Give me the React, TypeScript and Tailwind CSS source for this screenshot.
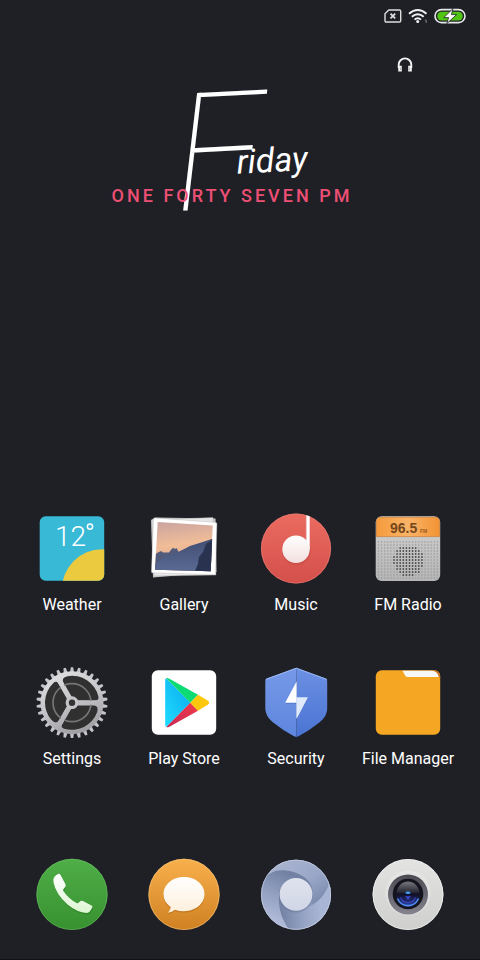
import React from "react";

const TEETH = Array.from({ length: 30 }, (_, i) => i * 12);

const HOLES = Array.from({ length: 13 }, (_, row) =>
    Array.from({ length: 20 }, (_, col) => {
        const x = 6.5 + col * 3.1;
        const y = 30 + row * 3;
        return { x, y, dark: Math.hypot(x - 36.5, y - 48.5) < 15.5 };
    })
).flat();

function IconFrame({ children }: { children: React.ReactNode }) {
    return (
        <svg viewBox="0 0 72 72" className="size-[72px] shrink-0" aria-hidden="true">
            {children}
        </svg>
    );
}

function WeatherIcon() {
    return (
        <IconFrame>
            <defs>
                <clipPath id="weather-tile">
                    <rect x="3.7" y="4.3" width="64.5" height="64.5" rx="6" />
                </clipPath>
            </defs>
            <g clipPath="url(#weather-tile)">
                <rect width="72" height="72" fill="#38b9d6" />
                <circle cx="66" cy="77.3" r="40" fill="#ebca40" />
            </g>
            <text x="19" y="34" fontSize="28" fill="#fff" className="font-['Roboto',sans-serif] font-light">12</text>
            <circle cx="54" cy="14.6" r="2.6" fill="none" stroke="#fff" strokeWidth="1.5" />
        </IconFrame>
    );
}

function GalleryIcon() {
    return (
        <IconFrame>
            <defs>
                <linearGradient id="gallery-sky" x1="0" y1="0" x2="0.15" y2="1">
                    <stop offset="0" stopColor="#c9a3a0" />
                    <stop offset="0.5" stopColor="#f0bd98" />
                    <stop offset="1" stopColor="#e3a58d" />
                </linearGradient>
                <linearGradient id="gallery-hill" x1="0" y1="0" x2="0" y2="1">
                    <stop offset="0" stopColor="#414e73" />
                    <stop offset="1" stopColor="#5a6a93" />
                </linearGradient>
            </defs>
            <path d="M7 5.5 67.5 6.5 68.5 60 5 65.5 3 8Z" fill="#c9c9c9" />
            <path d="M4 8 65 5.5 68 63 6 64Z" fill="#e6e6e6" stroke="#aaa" strokeWidth="0.4" />
            <path d="M7 6 67.8 10.4Q69 10.5 68.9 12L67.5 61.3Q67.4 62.5 66 62.5L4.5 60.8Q3.3 60.7 3.4 59.5L5.6 7.2Q5.7 6 7 6Z" fill="#fff" stroke="#bbb" strokeWidth="0.4" />
            <path d="M9.7 10 64.7 13.5 62.7 59.3 7 57.7Z" fill="url(#gallery-sky)" />
            <path d="M7.9 42 9 41 13 39 15 40.6 21 40.4 22.5 38.5 25 35.8 27 37 28.5 36 31 40.5 42 34 64.1 27 62.7 59.3 7 57.7Z" fill="#515b7c" />
            <path d="M7.2 52 17 45 29 40.5 42 34.3 51 31.7 64.1 27 62.7 59.3 7 57.7Z" fill="url(#gallery-hill)" />
            <path d="M64.1 28 58 32 55 40 51 45 50 52 47 58.8 62.7 59.3Z" fill="#293350" />
        </IconFrame>
    );
}

function MusicIcon() {
    return (
        <IconFrame>
            <defs>
                <linearGradient id="music-disc" x1="0" y1="0" x2="0" y2="1">
                    <stop offset="0" stopColor="#ea6b60" />
                    <stop offset="1" stopColor="#d4504b" />
                </linearGradient>
                <linearGradient id="music-note" x1="0" y1="0" x2="0" y2="1">
                    <stop offset="0" stopColor="#fff" />
                    <stop offset="1" stopColor="#f3dfdf" />
                </linearGradient>
            </defs>
            <circle cx="36" cy="36.5" r="35" fill="url(#music-disc)" />
            <circle cx="36" cy="36.5" r="34.6" fill="none" stroke="#f0877d" strokeWidth="0.7" opacity="0.7" />
            <circle cx="36.3" cy="39" r="14.3" fill="#b94540" opacity="0.4" />
            <path d="M46 3.2 49.7 4.2V37.3H46Z" fill="#fff" />
            <path d="M46.3 3.4V32" stroke="#e9a8a4" strokeWidth="0.8" />
            <circle cx="36" cy="37.3" r="13.7" fill="url(#music-note)" />
        </IconFrame>
    );
}

function RadioIcon() {
    return (
        <IconFrame>
            <defs>
                <linearGradient id="radio-body" x1="0" y1="0" x2="0" y2="1">
                    <stop offset="0" stopColor="#d2d2d2" />
                    <stop offset="1" stopColor="#b5b5b5" />
                </linearGradient>
                <linearGradient id="radio-screen">
                    <stop offset="0" stopColor="#f59a3c" />
                    <stop offset="0.5" stopColor="#fbb468" />
                    <stop offset="1" stopColor="#f29334" />
                </linearGradient>
            </defs>
            <rect x="3.7" y="4.3" width="64.5" height="64.7" rx="6" fill="url(#radio-body)" />
            <path d="M4.5 24.6V10Q4.5 5.3 9.5 5.3H62.5Q67.5 5.3 67.5 10V24.6Z" fill="url(#radio-screen)" stroke="#ce7e2d" strokeWidth="0.7" />
            {HOLES.map((h) => (
                <circle key={`${h.x}-${h.y}`} cx={h.x} cy={h.y} r={h.dark ? 0.9 : 0.75} fill={h.dark ? "#4c4c4c" : "#999"} />
            ))}
            <text x="18" y="21.3" fontSize="14" fill="#74471d" className="font-['Liberation_Sans',sans-serif] font-bold">96.5</text>
            <text x="48" y="21" fontSize="5" fill="#9a5c22" className="font-['Liberation_Sans',sans-serif] font-bold">FM</text>
        </IconFrame>
    );
}

function SettingsIcon() {
    return (
        <IconFrame>
            <defs>
                <linearGradient id="gear-metal" gradientUnits="userSpaceOnUse" x1="20" y1="1" x2="48" y2="72">
                    <stop offset="0" stopColor="#e2e2e4" />
                    <stop offset="0.5" stopColor="#c4c4c8" />
                    <stop offset="1" stopColor="#97979c" />
                </linearGradient>
            </defs>
            {TEETH.map((angle) => (
                <path key={angle} d="M33.9 7 34.8 1.2H37.2L38.1 7Z" fill="#c5c5c9" transform={`rotate(${angle} 36 36.7)`} />
            ))}
            <circle cx="36" cy="36.7" r="31.5" fill="url(#gear-metal)" />
            {[0, 120, 240].map((angle) => (
                <path
                    key={angle}
                    d="M42 34.3H60Q63 34.3 62.4 30.5A27 27 0 0 0 31.5 10.2Q24.8 12 27.5 16.5L36 31.2Q40.2 31.8 42 34.3Z"
                    fill="#303030"
                    transform={`rotate(${angle} 36 36.7)`}
                />
            ))}
            <circle cx="36" cy="36.7" r="19" fill="none" stroke="#757577" strokeWidth="1.7" />
            <path d="M36 36.7H64M36 36.7 22 12.4M36 36.7 22 61" stroke="url(#gear-metal)" strokeWidth="4" />
            <circle cx="36" cy="36.7" r="4.8" fill="#333" stroke="#c5c5c9" strokeWidth="3.2" />
        </IconFrame>
    );
}

function PlayStoreIcon() {
    return (
        <IconFrame>
            <defs>
                <linearGradient id="play-blue" x1="1" y1="0" x2="0" y2="1">
                    <stop offset="0" stopColor="#0aa9ee" />
                    <stop offset="1" stopColor="#1fdcff" />
                </linearGradient>
                <linearGradient id="play-red" x1="1" y1="0" x2="0" y2="1">
                    <stop offset="0" stopColor="#f2394a" />
                    <stop offset="1" stopColor="#c52a55" />
                </linearGradient>
            </defs>
            <rect x="3.8" y="4.3" width="64.4" height="64.5" rx="6" fill="#fff" />
            <path d="M18.3 12.3 42.5 36.7 18.3 61Q17.2 60.6 17.2 59V14Q17.2 12.6 18.3 12.3Z" fill="url(#play-blue)" />
            <path d="M18.3 12.3Q19.4 11.7 21 12.4L50 28.7 42.3 36.7Z" fill="#0cdb73" />
            <path d="M18.3 61Q19.4 61.7 21 60.9L50 44.8 42.3 36.7Z" fill="url(#play-red)" />
            <path d="M50 28.7 60 34.8Q62.4 36.7 60 38.6L50 44.8 42.3 36.7Z" fill="#fdc70b" />
        </IconFrame>
    );
}

function SecurityIcon() {
    return (
        <IconFrame>
            <defs>
                <linearGradient id="shield-left" x1="0" y1="0" x2="0" y2="1">
                    <stop offset="0" stopColor="#7699e8" />
                    <stop offset="1" stopColor="#5e86de" />
                </linearGradient>
                <linearGradient id="shield-right" x1="0" y1="0" x2="0" y2="1">
                    <stop offset="0" stopColor="#6b90e3" />
                    <stop offset="1" stopColor="#4b74d3" />
                </linearGradient>
            </defs>
            <path d="M36.3 1.8Q21 7.5 7 12.3Q5.3 13 5.3 15V43Q5.6 50 12.5 56Q23 64.5 34 70.2L36.3 71Z" fill="url(#shield-left)" />
            <path d="M36.3 1.8Q51.5 7.5 65.5 12.3Q67.2 13 67.2 15V43Q67 50 60 56Q49.5 64.5 38.5 70.2L36.3 71Z" fill="url(#shield-right)" />
            <path d="M5.8 13.5Q21 7.8 36.3 2.2Q51.5 7.8 66.8 13.5" fill="none" stroke="#a1bdf3" strokeWidth="0.9" />
            <path d="M36.3 16.5V31.5H48.5L37 53V38H25.5Z" fill="#4467b8" opacity="0.4" />
            <path d="M36.6 15.5V36.7H25.2Z" fill="#fff" />
            <path d="M36.3 31.2H48L37 52.3H36.3Z" fill="#dfeafc" />
        </IconFrame>
    );
}

function FilesIcon() {
    return (
        <IconFrame>
            <rect x="3.8" y="4.3" width="64.4" height="64.5" rx="6" fill="#f5a623" />
            <path d="M61 4.3H62.5Q68.2 4.5 68.2 10.5V12L64 9Z" fill="#c87428" />
            <path d="M30.5 4.8H60Q65.5 5.2 66.7 10.9H35.3Q33.8 10.9 33 9.3Z" fill="#f7f7f7" />
        </IconFrame>
    );
}

function PhoneIcon() {
    const handset =
        "M22.8 15.8Q23.8 15.5 24.4 16.7L29.6 26.6Q30.2 28.2 29 29.3L27.5 31Q26.8 32 27.3 33Q32.5 40.6 40.5 45Q41.6 45.6 42.5 44.7L44.3 43.2Q45.5 42.3 46.9 43L55.5 47.4Q57 48.4 56.2 49.8L53.8 53.5Q52.8 54.9 50.5 54.9Q41.5 54.7 31.5 46.5Q20 36.5 17.5 24.5Q16.8 20.5 18.5 18.8Q20 16.7 22.8 15.8Z";
    return (
        <IconFrame>
            <defs>
                <linearGradient id="phone-disc" x1="0" y1="0" x2="0" y2="1">
                    <stop offset="0" stopColor="#4fae48" />
                    <stop offset="1" stopColor="#37912f" />
                </linearGradient>
                <linearGradient id="phone-set" x1="0" y1="0" x2="0" y2="1">
                    <stop offset="0" stopColor="#fff" />
                    <stop offset="1" stopColor="#ddf6d2" />
                </linearGradient>
            </defs>
            <circle cx="36" cy="36.4" r="35.6" fill="url(#phone-disc)" />
            <circle cx="36" cy="36.4" r="35.2" fill="none" stroke="#7cc876" strokeWidth="0.7" opacity="0.6" />
            <path d={handset} fill="#1d6b1a" opacity="0.35" transform="translate(0.5 1.5)" />
            <path d={handset} fill="url(#phone-set)" />
        </IconFrame>
    );
}

function MessagesIcon() {
    const bubble =
        "M36 19C47.5 19 56.5 26.5 56.5 36S47.5 53.2 36 53.2Q31 53.2 27 51.7Q24 54 20 54.8Q22.3 52.2 22.8 49.2Q15.5 44.2 15.5 36C15.5 26.5 24.5 19 36 19Z";
    return (
        <IconFrame>
            <defs>
                <linearGradient id="msg-disc" x1="0" y1="0" x2="0" y2="1">
                    <stop offset="0" stopColor="#f8b04c" />
                    <stop offset="1" stopColor="#d08122" />
                </linearGradient>
                <linearGradient id="msg-bubble" x1="0" y1="0" x2="0" y2="1">
                    <stop offset="0" stopColor="#fff" />
                    <stop offset="1" stopColor="#fcefdc" />
                </linearGradient>
            </defs>
            <circle cx="36" cy="36.4" r="35.6" fill="url(#msg-disc)" />
            <circle cx="36" cy="36.4" r="35.2" fill="none" stroke="#fbd08e" strokeWidth="0.7" opacity="0.7" />
            <path d={bubble} fill="#96560c" opacity="0.35" transform="translate(0 1.4)" />
            <path d={bubble} fill="url(#msg-bubble)" />
        </IconFrame>
    );
}

function BrowserIcon() {
    return (
        <IconFrame>
            <defs>
                <clipPath id="browser-clip">
                    <circle cx="36" cy="36.7" r="35" />
                </clipPath>
                <linearGradient id="blade-top" gradientUnits="userSpaceOnUse" x1="24" y1="5" x2="56" y2="50">
                    <stop offset="0" stopColor="#a7b2ce" />
                    <stop offset="0.5" stopColor="#9aa7c8" />
                    <stop offset="1" stopColor="#7887ab" />
                </linearGradient>
                <linearGradient id="blade-left" gradientUnits="userSpaceOnUse" x1="30" y1="16" x2="12" y2="60">
                    <stop offset="0" stopColor="#7281a3" />
                    <stop offset="0.5" stopColor="#929fc0" />
                    <stop offset="1" stopColor="#aeb9d7" />
                </linearGradient>
                <linearGradient id="blade-bottom" gradientUnits="userSpaceOnUse" x1="20" y1="52" x2="60" y2="50">
                    <stop offset="0" stopColor="#7281a3" />
                    <stop offset="0.6" stopColor="#97a4c5" />
                    <stop offset="1" stopColor="#a9b5d4" />
                </linearGradient>
                <linearGradient id="browser-core" x1="0" y1="0" x2="0" y2="1">
                    <stop offset="0" stopColor="#dfe3ee" />
                    <stop offset="1" stopColor="#d0d6e6" />
                </linearGradient>
            </defs>
            <g clipPath="url(#browser-clip)">
                <rect width="72" height="72" fill="url(#blade-left)" />
                <path d="M0 20 12 14.5C25 8 52 17 52.5 33L52 46 72 40V0H0Z" fill="url(#blade-top)" />
                <path d="M71 18C68 36 56 50 36 52.5L20 30C17 46 20 60 31 74H72Z" fill="url(#blade-bottom)" />
            </g>
            <circle cx="36" cy="36.7" r="34.6" fill="none" stroke="#c6cee2" strokeWidth="0.7" />
            <circle cx="36" cy="37.6" r="17" fill="#5c6a8e" opacity="0.35" />
            <circle cx="36" cy="36.3" r="16.4" fill="url(#browser-core)" />
        </IconFrame>
    );
}

function CameraIcon() {
    return (
        <IconFrame>
            <defs>
                <linearGradient id="cam-body" x1="0" y1="0" x2="0" y2="1">
                    <stop offset="0" stopColor="#e3e3e2" />
                    <stop offset="1" stopColor="#cfcfce" />
                </linearGradient>
                <linearGradient id="cam-ring" x1="0" y1="0" x2="0" y2="1">
                    <stop offset="0" stopColor="#4b4a52" />
                    <stop offset="1" stopColor="#85838f" />
                </linearGradient>
                <linearGradient id="cam-glass" x1="0" y1="0" x2="0" y2="1">
                    <stop offset="0" stopColor="#77777f" />
                    <stop offset="0.42" stopColor="#2a2a36" />
                    <stop offset="0.5" stopColor="#101025" />
                    <stop offset="1" stopColor="#2e3c9c" />
                </linearGradient>
            </defs>
            <circle cx="36" cy="36.5" r="35.4" fill="url(#cam-body)" />
            <circle cx="36" cy="36.5" r="35" fill="none" stroke="#f3f3f3" strokeWidth="0.7" />
            <circle cx="36" cy="35" r="22.5" fill="#f1f1f0" opacity="0.35" />
            <circle cx="36" cy="36.5" r="20" fill="url(#cam-ring)" />
            <circle cx="36" cy="36" r="15.3" fill="#14141f" />
            <ellipse cx="36" cy="36" rx="11.5" ry="12.5" fill="url(#cam-glass)" />
            <path d="M25.5 40.5A11.3 11.3 0 0 0 46.5 40.5" fill="none" stroke="#4b8bf0" strokeWidth="1.6" />
            <path d="M28.5 39.5A8 8 0 0 0 43.5 39.5" fill="none" stroke="#3346c2" strokeWidth="1.2" />
            <ellipse cx="36" cy="34.7" rx="2.6" ry="1.3" fill="#3c9bf5" />
            <path d="M33 38.3H39L36 42Z" fill="#3349ca" />
        </IconFrame>
    );
}

const APPS = [
    { name: "Weather", Icon: WeatherIcon },
    { name: "Gallery", Icon: GalleryIcon },
    { name: "Music", Icon: MusicIcon },
    { name: "FM Radio", Icon: RadioIcon },
    { name: "Settings", Icon: SettingsIcon },
    { name: "Play Store", Icon: PlayStoreIcon },
    { name: "Security", Icon: SecurityIcon },
    { name: "File Manager", Icon: FilesIcon }
];

const DOCK = [
    { name: "Phone", Icon: PhoneIcon },
    { name: "Messages", Icon: MessagesIcon },
    { name: "Browser", Icon: BrowserIcon },
    { name: "Camera", Icon: CameraIcon }
];

function StatusBar() {
    return (
        <header className="flex h-8 items-center justify-end gap-1.5 px-3.5">
            {/* No SIM */}
            <svg viewBox="0 0 18 14" className="h-3.5 w-[18px]" fill="none" stroke="#dededf" aria-label="No SIM">
                <path d="M4.8 1H15.5Q16.7 1 16.7 2.2V11.8Q16.7 13 15.5 13H2.2Q1 13 1 11.8V4.8Z" strokeWidth="1.4" />
                <path d="M6.5 4.6 11.2 9.4M11.2 4.6 6.5 9.4" strokeWidth="1.8" />
            </svg>
            {/* Wi-Fi */}
            <svg viewBox="0 0 20 16" className="h-4 w-5" fill="none" stroke="#f2f2f3" aria-label="Wi-Fi">
                <path d="M1 5.7Q9.7-1.8 18.5 5.7M3.8 8.8Q9.7 3.6 15.7 8.8M6.5 11.6Q9.7 8.8 13 11.6" strokeWidth="1.9" />
                <circle cx="9.7" cy="13.6" r="1.5" fill="#f2f2f3" stroke="none" />
                <path d="M16.9 12.2H18.2V15" stroke="#8d8d91" strokeWidth="0.9" />
            </svg>
            {/* Battery, charging */}
            <svg viewBox="0 0 32 16" className="h-4 w-8" aria-label="Charging">
                <rect x="1" y="1.6" width="30" height="13" rx="6.5" fill="#1f2026" stroke="#e9e9ea" strokeWidth="1.6" />
                <rect x="3.2" y="3.8" width="25.6" height="8.6" rx="4.3" fill="#4fc414" />
                <path d="M19 0.6 9.8 9.6H14.6L12.8 15.6 22.6 6.6H17.4Z" fill="#fff" stroke="#1f2026" strokeWidth="0.8" />
            </svg>
        </header>
    );
}

export default function App() {
    return (
        <div className="flex min-h-screen flex-col border-b border-[#121317] bg-[#1f2026] font-['Roboto',sans-serif] text-white">
            <StatusBar />

            <div className="flex justify-end pt-6 pr-[66px]">
                <svg viewBox="0 0 18 18" className="size-[18px]" fill="none" stroke="#f2f2f2" aria-label="Headphones">
                    <path d="M2.7 12V8.7A6.3 6.3 0 0 1 15.3 8.7V12" strokeWidth="1.9" />
                    <path d="M4 9.8V15.5M14 9.8V15.5" strokeWidth="3.6" />
                    <path d="M4.6 11.5V14M13.4 11.5V14" stroke="#8b8b90" strokeWidth="0.6" />
                </svg>
            </div>

            {/* Clock widget */}
            <section className="flex flex-col items-center pt-2 pr-4">
                <h1 className="flex -rotate-3 items-end pl-4 font-thin italic">
                    <span className="text-[164px] leading-[140px]">F</span>
                    <span className="-ml-7 pb-10 text-[34px] leading-[40px] font-normal">riday</span>
                </h1>
                <p className="relative -mt-[38px] text-lg leading-6 font-medium tracking-[3px] text-[#ee4f75]">ONE FORTY SEVEN PM</p>
            </section>

            <main className="mt-auto grid grid-cols-4 gap-y-[49px] px-4 pt-12">
                {APPS.map(({ name, Icon }) => (
                    <button key={name} type="button" className="flex flex-col items-center gap-[9px]">
                        <Icon />
                        <span className="text-base leading-6 whitespace-nowrap">{name}</span>
                    </button>
                ))}
            </main>

            <nav className="grid grid-cols-4 px-4 pt-[87px] pb-[29px]">
                {DOCK.map(({ name, Icon }) => (
                    <button key={name} type="button" aria-label={name} className="flex justify-center">
                        <Icon />
                    </button>
                ))}
            </nav>
        </div>
    );
}
